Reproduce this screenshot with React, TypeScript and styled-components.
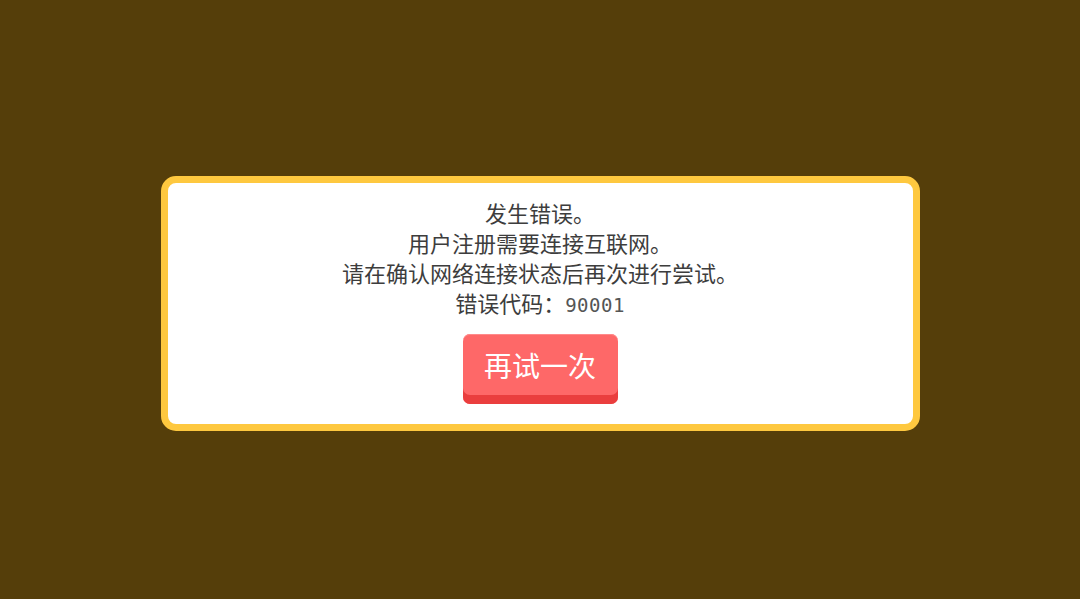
import React from 'react';
import styled, { createGlobalStyle } from 'styled-components';

const GlobalStyle = createGlobalStyle`
  html, body {
    margin: 0;
    padding: 0;
    background: #553e0a;
  }

  body {
    font-family: "Noto Sans CJK SC", "Noto Sans", sans-serif;
  }
`;

export default function App() {
  return (
    <>
      <GlobalStyle />
      <Screen>
        <Dialog>
          <Message>
            <Line>发生错误。</Line>
            <Line>用户注册需要连接互联网。</Line>
            <Line>请在确认网络连接状态后再次进行尝试。</Line>
            <Line>
              错误代码：<Code>90001</Code>
            </Line>
          </Message>
          <RetryButton type="button">再试一次</RetryButton>
        </Dialog>
      </Screen>
    </>
  );
}

const Screen = styled.div`
  width: 1080px;
  height: 599px;
  box-sizing: border-box;
  padding-top: 8px;
  display: flex;
  align-items: center;
  justify-content: center;
  background: #553e0a;
`;

const Dialog = styled.div`
  width: 759px;
  box-sizing: border-box;
  border: 7px solid #fec83f;
  border-radius: 15px;
  background: #ffffff;
  padding: 14px 0 20px;
  display: flex;
  flex-direction: column;
  align-items: center;
`;

const Message = styled.div`
  display: flex;
  flex-direction: column;
  align-items: center;
  color: #3d3d3d;
  font-size: 22px;
  line-height: 30px;
`;

const Line = styled.div`
  white-space: nowrap;
`;

const Code = styled.span`
  font-family: "DejaVu Sans Mono", "Liberation Mono", monospace;
  font-size: 19px;
  letter-spacing: 0.5px;
  color: #555555;
`;

const RetryButton = styled.button`
  margin-top: 14px;
  width: 155px;
  height: 70px;
  box-sizing: border-box;
  padding: 0 0 8px;
  border: none;
  border-radius: 7px;
  background: #fe6868;
  box-shadow: inset 0 -9px 0 #ea3e3e, inset 0 1px 0 #ff8a8a;
  color: #ffffff;
  font-family: "Noto Sans CJK SC", "Noto Sans", sans-serif;
  font-size: 28px;
  line-height: 1;
  cursor: pointer;
`;
